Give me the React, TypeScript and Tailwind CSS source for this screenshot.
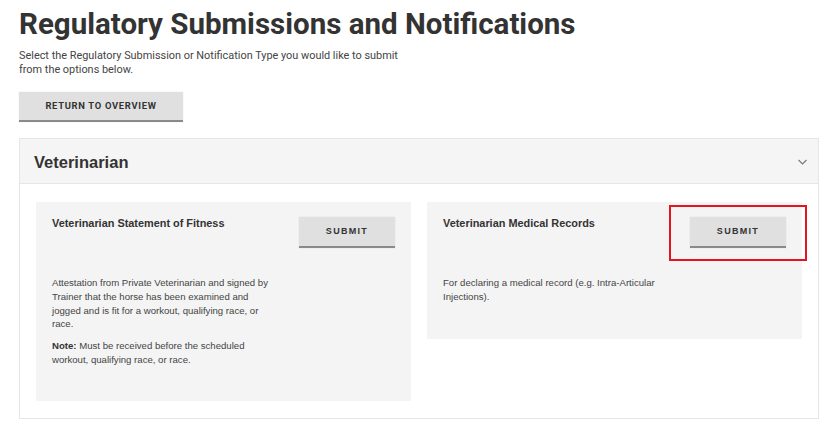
import React from "react";

const roboto = { fontFamily: "Roboto, 'Liberation Sans', sans-serif" };
const arial = { fontFamily: "'Liberation Sans', Arial, sans-serif" };

function SubmitButton() {
  return (
    <button
      className="w-[96px] h-[31px] bg-[#e0e0e0] border-b-2 border-[#8a8a8a] text-[#333] text-[9px] font-bold tracking-[1.3px] shadow-[0_0_1px_rgba(0,0,0,0.15)]"
      style={arial}
    >
      SUBMIT
    </button>
  );
}

function Card({
  title,
  children,
  highlight,
}: {
  title: string;
  children: React.ReactNode;
  highlight?: boolean;
}) {
  return (
    <div className="bg-[#f4f4f4] px-[16px] pt-[15px] pb-[35px]" style={arial}>
      <div className="flex items-start justify-between">
        <div className="text-[10.9px] leading-[13px] font-bold text-[#333]">{title}</div>
        <div className="relative">
          {highlight && (
            <div className="absolute -left-[21px] -right-[21px] -top-[12px] -bottom-[13px] border-[2.5px] border-[#e3161f]" />
          )}
          <SubmitButton />
        </div>
      </div>
      <div className="mt-[28px] w-[218px] text-[9.6px] leading-[13.7px] text-[#444]">{children}</div>
    </div>
  );
}

export default function App() {
  return (
    <div className="w-[835px] h-[430px] bg-white pl-[19px] pr-[16px] overflow-hidden">
      <h1
        className="pt-[6px] text-[29.5px] leading-[36px] font-bold text-[#333]"
        style={roboto}
      >
        Regulatory Submissions and Notifications
      </h1>
      <p
        className="mt-[7px] w-[395px] text-[10.9px] leading-[13.5px] text-[#444]"
        style={roboto}
      >
        Select the Regulatory Submission or Notification Type you would like to submit
        from the options below.
      </p>
      <button
        className="mt-[16px] w-[164px] h-[30px] bg-[#e0e0e0] border-b-2 border-[#8a8a8a] text-[9.4px] font-bold tracking-[0.7px] text-[#333] shadow-[0_0_1px_rgba(0,0,0,0.15)]"
        style={roboto}
      >
        RETURN TO OVERVIEW
      </button>

      <div className="mt-[16px] w-[800px] border border-[#e6e6e6]">
        <div className="h-[45px] bg-[#f5f5f5] border-b border-[#e6e6e6] flex items-center justify-between pl-[14px] pr-[11px]">
          <span className="text-[16.5px] font-bold text-[#333] pt-[2px]" style={arial}>
            Veterinarian
          </span>
          <svg width="9" height="6" viewBox="0 0 9 6" className="mt-[2px]">
            <polyline points="0.5,1 4.5,5 8.5,1" fill="none" stroke="#777" strokeWidth="1.1" />
          </svg>
        </div>
        <div className="grid grid-cols-2 gap-[16px] px-[16px] pt-[18px] pb-[17px] items-start">
          <Card title="Veterinarian Statement of Fitness">
            <p>
              Attestation from Private Veterinarian and signed by Trainer that the horse has
              been examined and jogged and is fit for a workout, qualifying race, or race.
            </p>
            <p className="mt-[8px]">
              <span className="font-bold text-[#333]">Note:</span> Must be received before the
              scheduled workout, qualifying race, or race.
            </p>
          </Card>
          <Card title="Veterinarian Medical Records" highlight>
            <p>For declaring a medical record (e.g. Intra-Articular Injections).</p>
          </Card>
        </div>
      </div>
    </div>
  );
}
